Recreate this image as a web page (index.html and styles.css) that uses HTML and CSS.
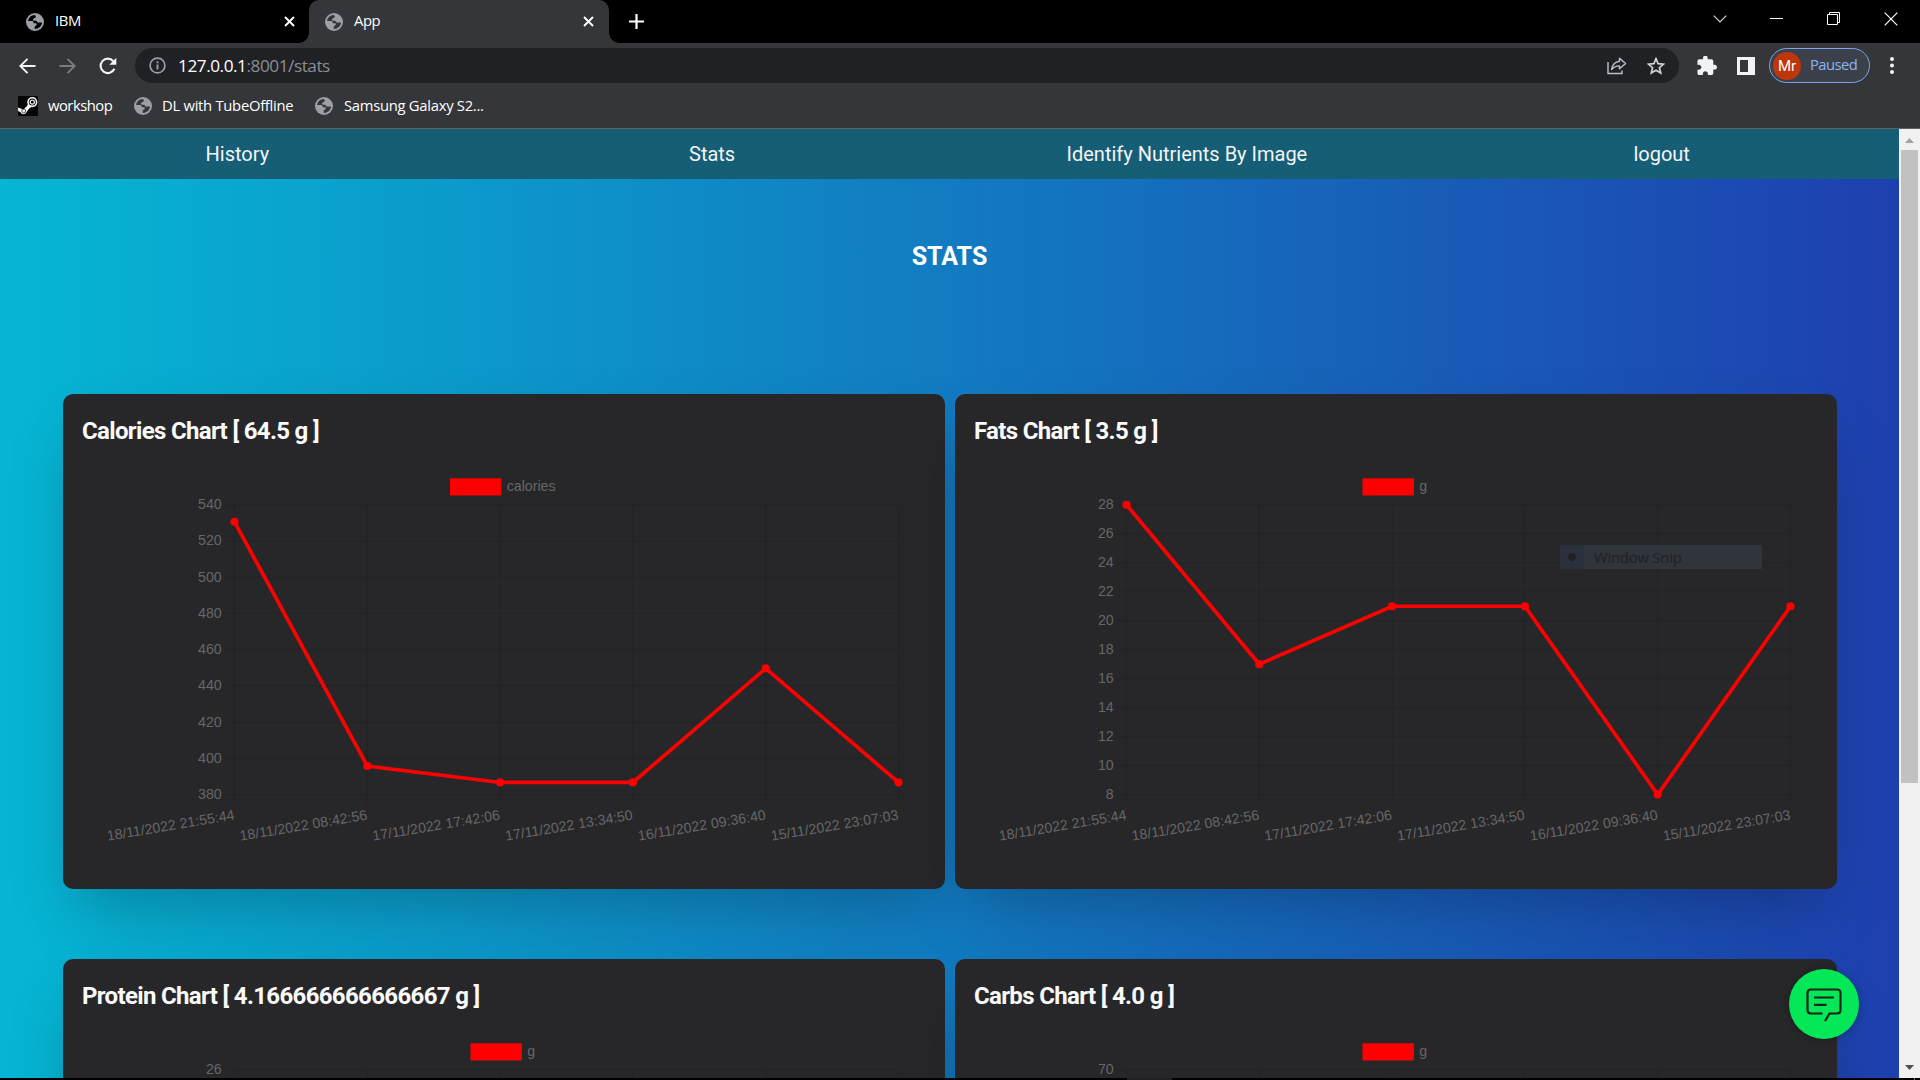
FILE: index.html
```html
<!DOCTYPE html>
<html lang="en">
<head>
<meta charset="utf-8">
<title>App</title>
<link rel="stylesheet" href="styles.css">
</head>
<body>
<svg class="defs" width="0" height="0">
  <symbol id="globe" viewBox="0 0 18 18">
    <circle cx="9" cy="9" r="9" fill="#9aa0a6"/>
    <path fill="currentColor" d="M8.6 2C5.200 2.200 2.500 4.700 2.100 7.900H5.500C7 7.900 7.700 8.500 7.700 9.600V10.300H9.800C10.900 10.300 11.200 11.200 10.500 11.900L8.700 13.600V16C12.900 16 15.800 13 16 9.600H12.600C11.200 9.600 10.600 8.800 10.600 7.700H8.200C6.900 7.700 6.600 6.500 7.500 5.800L9.500 4.600C10.100 4.200 9.900 2.600 8.600 2Z"/>
  </symbol>
  <symbol id="cross" viewBox="0 0 11 11">
    <path d="M1 1L10 10M10 1L1 10" stroke="#fff" stroke-width="1.900" fill="none"/>
  </symbol>
</svg>

<header class="browser">
  <div class="tabstrip">
    <div class="tab">
      <svg class="favicon"><use href="#globe"/></svg>
      <span class="tab-title">IBM</span>
      <svg class="tab-close"><use href="#cross"/></svg>
    </div>
    <div class="tab tab-active">
      <svg class="favicon"><use href="#globe"/></svg>
      <span class="tab-title">App</span>
      <svg class="tab-close"><use href="#cross"/></svg>
    </div>
    <svg class="new-tab" width="15" height="15" viewBox="0 0 15 15"><path d="M7.500 0V15M0 7.500H15" stroke="#fff" stroke-width="2.200"/></svg>
    <div class="window-controls">
      <svg width="14" height="14" viewBox="0 0 14 14"><path d="M.7 3.700L7 10L13.300 3.700" fill="none" stroke="#ddd" stroke-width="1.100"/></svg>
      <svg width="13" height="14" viewBox="0 0 13 14"><path d="M0 6.500H13" stroke="#fff"/></svg>
      <svg width="14" height="14" viewBox="0 0 14 14"><path d="M.5 2.500H10.500V12.500H.5ZM2.500 2.500V.5H12.500V10.500H10.500" fill="none" stroke="#fff"/></svg>
      <svg width="14" height="14" viewBox="0 0 14 14"><path d="M.7 .7L13.300 13.300M13.300 .7L.7 13.300" stroke="#fff" stroke-width="1.200"/></svg>
    </div>
  </div>

  <div class="toolbar">
    <svg class="back" width="17" height="16" viewBox="0 0 17 16"><path d="M16.500 8H1.500M8.500 .8L1.300 8L8.500 15.200" fill="none" stroke="#f1f3f4" stroke-width="1.900"/></svg>
    <svg class="forward" width="17" height="16" viewBox="0 0 17 16"><path d="M.5 8H15.500M8.500 .8L15.700 8L8.500 15.200" fill="none" stroke="#7b7d80" stroke-width="1.900"/></svg>
    <svg class="reload" width="18" height="18" viewBox="0 0 18 18"><path d="M15.400 11.800A7.200 7.200 0 1 1 14.300 4.200" fill="none" stroke="#f1f3f4" stroke-width="2.100"/><path d="M17.300 .8V7.800H10.300Z" fill="#f1f3f4"/></svg>
    <div class="omnibox">
      <svg width="17" height="17" viewBox="0 0 17 17"><circle cx="8.500" cy="8.500" r="7.400" fill="none" stroke="#9aa0a6" stroke-width="1.700"/><path d="M8.500 7.500V12.500M8.500 4.300V6.200" stroke="#9aa0a6" stroke-width="1.900"/></svg>
      <span class="url"><b>127.0.0.1</b>:8001/stats</span>
      <svg class="share" width="20" height="18" viewBox="0 0 20 18"><path d="M1 5V16.500H15V13.500" fill="none" stroke="#bdc1c6" stroke-width="1.400"/><path d="M12.500 1.200L18.600 6.500L12.500 11.700V8.900C9.500 8.800 7 9.900 4.600 12.600C5.300 8 8 4.800 12.500 4.200Z" fill="none" stroke="#bdc1c6" stroke-width="1.400" stroke-linejoin="round"/></svg>
      <svg class="star" width="18" height="18" viewBox="0 0 18 18"><path d="M9 1.700L11.100 6.700L16.500 7.200L12.400 10.700L13.700 16L9 13.200L4.300 16L5.600 10.700L1.500 7.200L6.900 6.700Z" fill="none" stroke="#d0d2d6" stroke-width="1.700"/></svg>
    </div>
    <svg class="puzzle" width="20" height="20" viewBox="1.500 1.500 21.500 21.500"><path fill="#f1f3f4" d="M20.500 11H19V7c0-1.100-.9-2-2-2h-4V3.500C13 2.120 11.880 1 10.500 1S8 2.120 8 3.500V5H4c-1.100 0-1.990.9-1.990 2v3.800H3.500c1.490 0 2.700 1.210 2.700 2.700s-1.210 2.700-2.700 2.700H2V20c0 1.100.9 2 2 2h3.800v-1.500c0-1.490 1.210-2.700 2.700-2.700 1.490 0 2.700 1.210 2.700 2.700V22H17c1.100 0 2-.9 2-2v-4h1.500c1.380 0 2.500-1.120 2.500-2.500S21.880 11 20.500 11z"/></svg>
    <svg class="panel" width="18" height="18" viewBox="0 0 18 18"><path fill="#f1f3f4" fill-rule="evenodd" d="M0 0H18V18H0ZM3 3V15H11V3Z"/></svg>
    <div class="profile"><span class="avatar">Mr</span><span class="paused">Paused</span></div>
    <svg class="dots" width="4" height="17" viewBox="0 0 4 17"><g fill="#f1f3f4"><circle cx="2" cy="2" r="2"/><circle cx="2" cy="8.500" r="2"/><circle cx="2" cy="15" r="2"/></g></svg>
  </div>

  <div class="bookmarks">
    <span class="bookmark bm-workshop">
      <svg width="20" height="20" viewBox="0 0 20 20"><rect width="20" height="20" rx="1" fill="#050507"/><path d="M0 11.500L5.500 13.600L9.500 9.500L11.500 12L8.300 16.500C7.300 18.800 3.600 18.800 2.600 16.200L0 15Z" fill="#f4f4f4"/><path d="M9 9.800L12 5.500L15.500 10L10.800 12.400Z" fill="#f4f4f4"/><circle cx="14.300" cy="6.100" r="4.300" fill="#050507" stroke="#f4f4f4" stroke-width="1.600"/><circle cx="14.300" cy="6.100" r="2.100" fill="none" stroke="#f4f4f4" stroke-width="1.200"/><circle cx="5.700" cy="15" r="1.900" fill="none" stroke="#333" stroke-width=".8"/></svg>
      <span>workshop</span>
    </span>
    <span class="bookmark bm-dl"><svg class="favicon"><use href="#globe"/></svg><span>DL with TubeOffline</span></span>
    <span class="bookmark bm-samsung"><svg class="favicon"><use href="#globe"/></svg><span>Samsung Galaxy S2...</span></span>
  </div>
</header>

<div class="viewport">
  <main class="page">
    <nav class="nav">
      <a>History</a><a>Stats</a><a>Identify Nutrients By Image</a><a>logout</a>
    </nav>
    <h1>STATS</h1>
    <section class="cards">
      <article class="card"><h2>Calories Chart [ 64.5 g ]</h2><svg class="chart" data-chart="calories"></svg></article>
      <article class="card">
        <h2>Fats Chart [ 3.5 g ]</h2><svg class="chart" data-chart="fats"></svg>
        <div class="snip-menu"><span class="snip-mark"></span><span class="snip-label">Window Snip</span></div>
      </article>
      <article class="card"><h2>Protein Chart [ 4.166666666666667 g ]</h2><svg class="chart" data-chart="protein"></svg></article>
      <article class="card"><h2>Carbs Chart [ 4.0 g ]</h2><svg class="chart" data-chart="carbs"></svg></article>
    </section>
    <div class="chat">
      <svg width="38" height="36" viewBox="0 0 38 36"><path d="M17.500 26.500H6Q2.500 26.500 2.500 23V6Q2.500 2.500 6 2.500H32Q35.500 2.500 35.500 6V23Q35.500 26.500 32 26.500H24.500L20 34" fill="none" stroke="#16231a" stroke-width="2.200"/><path d="M9 10.500H29M9 17.800H21.500" stroke="#16231a" stroke-width="2.200"/></svg>
    </div>
  </main>
  <div class="scrollbar">
    <svg width="21" height="21" viewBox="0 0 21 21"><path d="M6 14L10.500 9L15 14Z" fill="#a3a3a3"/></svg>
    <div class="thumb"></div>
    <svg class="down" width="21" height="21" viewBox="0 0 21 21"><path d="M6 8L10.500 13L15 8Z" fill="#505050"/></svg>
  </div>
</div>
<footer class="edge"><span class="edge-a"></span><span class="edge-b"></span></footer>
<script src="charts.js"></script>
</body>
</html>
```
FILE: styles.css
```css
* { box-sizing: border-box; }
body {
  margin: 0;
  width: 1920px;
  height: 1080px;
  overflow: hidden;
  display: flex;
  flex-direction: column;
  background: #000;
  font-family: Roboto, sans-serif;
}
.defs { position: absolute; }
svg { display: block; flex: none; }

/* browser window */
.browser {
  height: 129px;
  flex: none;
  background: #35363a;
  border-bottom: 1px solid #5f6063;
  color: #fff;
  font: 14.8px "Open Sans", "Noto Sans", sans-serif;
  letter-spacing: -0.4px;
}
.favicon { width: 18px; height: 18px; }
.tabstrip { height: 43px; background: #000; display: flex; }
.tab { width: 300px; margin-left: 9px; padding: 0 14px 0 17px; display: flex; align-items: center; color: #000; }
.tab-title { color: #fff; margin-left: 11px; flex: 1; padding-bottom: 3px; }
.tab-close { width: 11px; height: 11px; margin-bottom: 1px; }
.tab-active {
  position: relative;
  margin-left: 0;
  padding-left: 16px;
  padding-right: 15px;
  background: #35363a;
  border-radius: 10px 10px 0 0;
  color: #35363a;
}
.tab-active::before, .tab-active::after {
  content: "";
  position: absolute;
  bottom: 0;
  width: 10px;
  height: 10px;
}
.tab-active::before { left: -10px; background: radial-gradient(circle at 0 0, #000 9.500px, #35363a 10px); }
.tab-active::after { right: -10px; background: radial-gradient(circle at 100% 0, #000 9.500px, #35363a 10px); }
.new-tab { margin: 14px 0 0 19.500px; }
.window-controls { margin: 12px 22px 0 auto; display: flex; gap: 43.500px; }

.toolbar { height: 44px; display: flex; align-items: center; padding: 1px 0 0 19px; }
.forward { margin-left: 23px; }
.reload { margin-left: 23px; }
.omnibox {
  width: 1544px;
  height: 35px;
  margin-left: 18px;
  padding: 0 14px 0 14px;
  border-radius: 18px;
  background: #202124;
  display: flex;
  align-items: center;
  color: #8b8e92;
}
.url { margin-left: 12px; font-size: 17.2px; letter-spacing: -0.45px; }
.url b { font-weight: 400; color: #fff; }
.share { margin-left: auto; }
.star { margin-left: 20px; }
.puzzle { margin-left: 18px; }
.panel { margin-left: 20px; }
.profile {
  width: 101px;
  height: 35px;
  margin-left: 14px;
  padding-left: 3px;
  border: 1.500px solid #7ba4ea;
  border-radius: 18px;
  background: #3c404a;
  display: flex;
  align-items: center;
}
.avatar {
  width: 28px;
  height: 28px;
  border-radius: 50%;
  background: #bf360c;
  font: 15px/28px Roboto, sans-serif;
  letter-spacing: 0;
  text-align: center;
}
.paused { margin-left: 9px; padding-bottom: 3px; letter-spacing: -0.55px; color: #8ab4f8; }
.dots { margin-left: 20px; }

.bookmarks { height: 38px; display: flex; align-items: center; padding-left: 18px; }
.bookmark { display: flex; align-items: center; gap: 10px; white-space: nowrap; color: #35363a; }
.bookmark > span { color: #fff; padding-bottom: 2px; }
.bm-workshop { width: 116px; letter-spacing: -0.5px; }
.bm-dl { width: 181px; gap: 10px; }
.bm-samsung { gap: 11px; }
.bm-dl, .bm-samsung { letter-spacing: -0.28px; }

/* app page */
.viewport { height: 949px; flex: none; display: flex; }
.page {
  position: relative;
  width: 1899px;
  overflow: hidden;
  background: linear-gradient(to right, #06b6d4, #1e40af);
  color: #fff;
}
.nav {
  height: 50px;
  display: grid;
  grid-template-columns: repeat(4, 1fr);
  align-items: center;
  justify-items: center;
  background: #155e75;
  font-size: 20px;
  color: #f4f4f5;
}
h1 { margin: 60px 0 0; font-size: 25px; line-height: 35px; text-align: center; }
.cards {
  margin-top: 120px;
  padding: 0 62px 0 63px;
  display: grid;
  grid-template-columns: 882px 882px;
  gap: 70px 10px;
}
.card {
  position: relative;
  height: 495px;
  padding: 20px 20px 20px 19px;
  border-radius: 10px;
  background: #27272a;
  box-shadow: 0 31px 62px -15px rgba(0, 0, 0, .25);
}
h2 { margin: 0; font-size: 24px; line-height: 35px; letter-spacing: -0.66px; color: #fafafa; }
.chart { width: 842px; height: 420px; margin-left: 1px; font: 14.2px "Liberation Sans", Arial, sans-serif; }
.chart text { fill: #666; }
.grid { stroke: rgba(0, 0, 0, .1); stroke-width: 1.200; }
.line { fill: none; stroke: red; stroke-width: 3.700; }
.point, .key { fill: red; }

.snip-menu {
  position: absolute;
  left: 605px;
  top: 151px;
  width: 202px;
  height: 24px;
  display: flex;
  align-items: center;
  background: #30343b;
  font: 14.8px "Open Sans", "Noto Sans", sans-serif;
  letter-spacing: -0.2px;
  color: #202124;
}
.snip-mark { width: 24px; height: 24px; background: radial-gradient(circle at 50% 50%, #202124 3.500px, #2a313d 4.500px); }
.snip-label { margin-left: 10px; }

.chat {
  position: absolute;
  left: 1789px;
  top: 840px;
  width: 70px;
  height: 70px;
  border-radius: 50%;
  background: #04e858;
  box-shadow: 0 1px 8px rgba(0, 0, 0, .25);
}
.chat svg { margin: 18px 0 0 16px; }

.scrollbar { width: 21px; background: #f1f1f1; display: flex; flex-direction: column; align-items: center; }
.thumb { width: 17px; height: 633px; background: #c1c1c1; }
.down { margin-top: auto; }
.edge { height: 2px; display: flex; }
.edge-a { width: 45px; margin-left: 1127px; background: #222; }
.edge-b { width: 1px; margin-left: 742px; background: #777; }
```
FILE: charts.js
```js
const dates = [
  "18/11/2022 21:55:44", "18/11/2022 08:42:56", "17/11/2022 17:42:06",
  "17/11/2022 13:34:50", "16/11/2022 09:36:40", "15/11/2022 23:07:03"
];
const charts = {
  calories: { label: "calories", keyX: 367, min: 380, max: 540, step: 20, data: [530.600, 395.800, 386.700, 386.700, 449.700, 386.700] },
  fats: { label: "g", keyX: 387.500, min: 8, max: 28, step: 2, data: [28, 17, 21, 21, 8, 21] },
  protein: { label: "g", keyX: 387.500, min: 8, max: 26, step: 2, data: [] },
  carbs: { label: "g", keyX: 387.500, min: 0, max: 70, step: 10, data: [] }
};
const plotLeft = 151.500, columnGap = 132.800, plotTop = 55.800, plotBottom = 345.600;

for (const svg of document.querySelectorAll(".chart")) {
  const c = charts[svg.dataset.chart];
  const y = v => plotBottom - (v - c.min) / (c.max - c.min) * (plotBottom - plotTop);
  const x = i => plotLeft + i * columnGap;
  let out = `<rect class="key" x="${c.keyX}" y="29.300" width="51.400" height="17.200"/>
    <text x="${c.keyX + 56.700}" y="42">${c.label}</text>`;
  for (let v = c.min; v <= c.max; v += c.step) {
    out += `<path class="grid" d="M${plotLeft - 9} ${y(v)}H${x(5)}"/>
      <text x="138.700" y="${y(v) + 4.400}" text-anchor="end">${v}</text>`;
  }
  dates.forEach((d, i) => {
    out += `<path class="grid" d="M${x(i)} ${plotTop}V${plotBottom + 9}"/>
      <text text-anchor="end" transform="translate(${x(i) + .5} 370.500) rotate(-9.500)">${d}</text>`;
  });
  out += `<polyline class="line" points="${c.data.map((v, i) => `${x(i)},${y(v)}`).join(" ")}"/>`;
  c.data.forEach((v, i) => { out += `<circle class="point" cx="${x(i)}" cy="${y(v)}" r="4.100"/>`; });
  svg.innerHTML = out;
}
```
